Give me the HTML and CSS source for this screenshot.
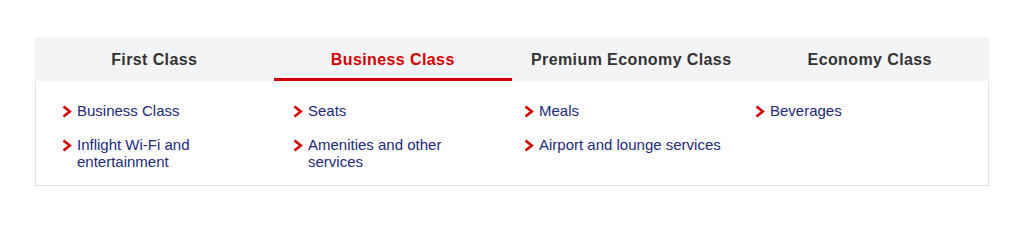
FILE: index.html
```html
<!DOCTYPE html>
<html>
<head>
    <link rel="stylesheet" href="styles.css">
</head>
<body>
    <div class="cabin-tabs">
        <div class="tab-bar">
            <div class="tab">First Class</div>
            <div class="tab active">Business Class</div>
            <div class="tab">Premium Economy Class</div>
            <div class="tab">Economy Class</div>
        </div>
        <div class="tab-panel">
            <ul class="links">
                <li><span class="chev"><svg width="10" height="13" viewBox="0 0 10 13"><polyline points="1.5,1.5 7.8,6.5 1.5,11.5" /></svg></span><a>Business Class</a></li>
                <li><span class="chev"><svg width="10" height="13" viewBox="0 0 10 13"><polyline points="1.5,1.5 7.8,6.5 1.5,11.5" /></svg></span><a>Inflight Wi-Fi and entertainment</a></li>
            </ul>
            <ul class="links">
                <li><span class="chev"><svg width="10" height="13" viewBox="0 0 10 13"><polyline points="1.5,1.5 7.8,6.5 1.5,11.5" /></svg></span><a>Seats</a></li>
                <li><span class="chev"><svg width="10" height="13" viewBox="0 0 10 13"><polyline points="1.5,1.5 7.8,6.5 1.5,11.5" /></svg></span><a>Amenities and other services</a></li>
            </ul>
            <ul class="links">
                <li><span class="chev"><svg width="10" height="13" viewBox="0 0 10 13"><polyline points="1.5,1.5 7.8,6.5 1.5,11.5" /></svg></span><a>Meals</a></li>
                <li><span class="chev"><svg width="10" height="13" viewBox="0 0 10 13"><polyline points="1.5,1.5 7.8,6.5 1.5,11.5" /></svg></span><a>Airport and lounge services</a></li>
            </ul>
            <ul class="links">
                <li><span class="chev"><svg width="10" height="13" viewBox="0 0 10 13"><polyline points="1.5,1.5 7.8,6.5 1.5,11.5" /></svg></span><a>Beverages</a></li>
            </ul>
        </div>
    </div>
</body>
</html>
```

FILE: styles.css
```css
:root {
    --tab-bg: #f3f4f6;
    --border: #e4e4e4;
    --heading: #333333;
    --red: #d40000;
    --link: #222a78;
}

body {
    margin: 0;
    padding: 37px 35px 0 35px;
    background: #ffffff;
    font-family: 'Liberation Sans', Arial, sans-serif;
}

.cabin-tabs {
    width: 954px;
}

.tab-bar {
    display: grid;
    grid-template-columns: repeat(4, 1fr);
    background: var(--tab-bg);
    height: 44px;
}

.tab {
    display: flex;
    align-items: center;
    justify-content: center;
    font-size: 16px;
    font-weight: bold;
    letter-spacing: 0.4px;
    color: var(--heading);
    box-sizing: border-box;
    border-bottom: 3px solid transparent;
    padding-top: 5px;
}

.tab.active {
    color: var(--red);
    border-bottom-color: var(--red);
}

.tab-panel {
    display: grid;
    grid-template-columns: repeat(4, 231px);
    border: 1px solid var(--border);
    border-top: none;
    padding: 21px 0 15px 26px;
}

.links {
    list-style: none;
    margin: 0;
    padding: 0 30px 0 0;
}

.links li {
    display: flex;
    align-items: flex-start;
    font-size: 15px;
    line-height: 17px;
    color: var(--link);
    margin-bottom: 16px;
}

.links li:last-child {
    margin-bottom: 0;
}

.chev {
    flex: none;
    width: 15px;
    height: 18px;
    display: flex;
    align-items: center;
}

.chev svg polyline {
    fill: none;
    stroke: var(--red);
    stroke-width: 2.6;
}
```
